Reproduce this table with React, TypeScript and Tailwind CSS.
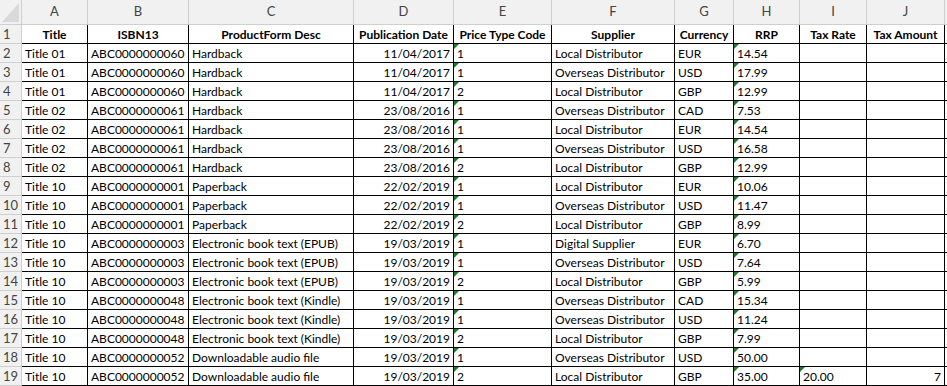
import React from 'react'

const cols = [
  { key: 'A', w: 'w-[66px]', head: 'Title', align: 'text-left' },
  { key: 'B', w: 'w-[101px]', head: 'ISBN13', align: 'text-left' },
  { key: 'C', w: 'w-[165px]', head: 'ProductForm Desc', align: 'text-left' },
  { key: 'D', w: 'w-[100px]', head: 'Publication Date', align: 'text-right' },
  { key: 'E', w: 'w-[98px]', head: 'Price Type Code', align: 'text-left' },
  { key: 'F', w: 'w-[123px]', head: 'Supplier', align: 'text-left' },
  { key: 'G', w: 'w-[59px]', head: 'Currency', align: 'text-left' },
  { key: 'H', w: 'w-[66px]', head: 'RRP', align: 'text-left' },
  { key: 'I', w: 'w-[67px]', head: 'Tax Rate', align: 'text-left' },
  { key: 'J', w: 'w-[78px]', head: 'Tax Amount', align: 'text-right' },
  { key: '', w: 'w-[60px]', head: '', align: 'text-left' },
]

const rows: string[][] = [
  ['Title 01', 'ABC0000000060', 'Hardback', '11/04/2017', '1', 'Local Distributor', 'EUR', '14.54', '', ''],
  ['Title 01', 'ABC0000000060', 'Hardback', '11/04/2017', '1', 'Overseas Distributor', 'USD', '17.99', '', ''],
  ['Title 01', 'ABC0000000060', 'Hardback', '11/04/2017', '2', 'Local Distributor', 'GBP', '12.99', '', ''],
  ['Title 02', 'ABC0000000061', 'Hardback', '23/08/2016', '1', 'Overseas Distributor', 'CAD', '7.53', '', ''],
  ['Title 02', 'ABC0000000061', 'Hardback', '23/08/2016', '1', 'Local Distributor', 'EUR', '14.54', '', ''],
  ['Title 02', 'ABC0000000061', 'Hardback', '23/08/2016', '1', 'Overseas Distributor', 'USD', '16.58', '', ''],
  ['Title 02', 'ABC0000000061', 'Hardback', '23/08/2016', '2', 'Local Distributor', 'GBP', '12.99', '', ''],
  ['Title 10', 'ABC0000000001', 'Paperback', '22/02/2019', '1', 'Local Distributor', 'EUR', '10.06', '', ''],
  ['Title 10', 'ABC0000000001', 'Paperback', '22/02/2019', '1', 'Overseas Distributor', 'USD', '11.47', '', ''],
  ['Title 10', 'ABC0000000001', 'Paperback', '22/02/2019', '2', 'Local Distributor', 'GBP', '8.99', '', ''],
  ['Title 10', 'ABC0000000003', 'Electronic book text (EPUB)', '19/03/2019', '1', 'Digital Supplier', 'EUR', '6.70', '', ''],
  ['Title 10', 'ABC0000000003', 'Electronic book text (EPUB)', '19/03/2019', '1', 'Overseas Distributor', 'USD', '7.64', '', ''],
  ['Title 10', 'ABC0000000003', 'Electronic book text (EPUB)', '19/03/2019', '2', 'Local Distributor', 'GBP', '5.99', '', ''],
  ['Title 10', 'ABC0000000048', 'Electronic book text (Kindle)', '19/03/2019', '1', 'Overseas Distributor', 'CAD', '15.34', '', ''],
  ['Title 10', 'ABC0000000048', 'Electronic book text (Kindle)', '19/03/2019', '1', 'Overseas Distributor', 'USD', '11.24', '', ''],
  ['Title 10', 'ABC0000000048', 'Electronic book text (Kindle)', '19/03/2019', '2', 'Local Distributor', 'GBP', '7.99', '', ''],
  ['Title 10', 'ABC0000000052', 'Downloadable audio file', '19/03/2019', '1', 'Overseas Distributor', 'USD', '50.00', '', ''],
  ['Title 10', 'ABC0000000052', 'Downloadable audio file', '19/03/2019', '2', 'Local Distributor', 'GBP', '35.00', '20.00', '7'],
]

// text stored as number flag (green corner)
function flagged(ci: number, val: string) {
  return val !== '' && (ci === 4 || ci === 7 || ci === 8)
}

export default function App() {
  return (
    <div className="w-[947px] h-[386px] overflow-hidden bg-white text-black" style={{ fontFamily: 'Lato, "Liberation Sans", sans-serif' }}>
      {/* column letters */}
      <div className="flex h-[25px] w-max bg-[#f1f1f1] border-b border-[#cfcfcf]">
        <div className="w-[22px] h-full border-r border-[#cfcfcf] relative">
          <svg className="absolute inset-0" width="21" height="24" viewBox="0 0 21 24">
            <polygon points="2,22 19,22 19,3" fill="#d9d9d9" />
          </svg>
        </div>
        {cols.map((c, i) => (
          <div key={i} className={`${c.w} h-full border-r border-[#cfcfcf] flex items-center justify-center text-[13px] text-[#444]`}>
            {c.key}
          </div>
        ))}
      </div>

      {/* header row */}
      <div className="flex h-[19px] w-max">
        <div className="w-[22px] h-full bg-[#f1f1f1] border-r border-b border-[#cfcfcf] pl-[3px] text-[13px] text-[#444] leading-[19px]">1</div>
        {cols.map((c, i) => (
          <div key={i} className={`${c.w} h-full border-r border-b border-black text-center font-bold text-[12px] leading-[19px] whitespace-nowrap overflow-hidden`}>
            {c.head}
          </div>
        ))}
      </div>

      {rows.map((r, ri) => (
        <div key={ri} className="flex h-[19px] w-max">
          <div className="w-[22px] h-full bg-[#f1f1f1] border-r border-b border-[#cfcfcf] pl-[3px] text-[13px] text-[#444] leading-[19px]">{ri + 2}</div>
          {cols.map((c, ci) => {
            const val = r[ci] ?? ''
            return (
              <div key={ci} className={`${c.w} h-full relative border-r border-b border-black ${c.align} px-[3px] text-[12px] leading-[19px] whitespace-nowrap overflow-hidden`}>
                {flagged(ci, val) && (
                  <span className="absolute left-0 top-0 w-0 h-0 border-t-[5px] border-t-[#1f7a2e] border-r-[5px] border-r-transparent" />
                )}
                {val}
              </div>
            )
          })}
        </div>
      ))}
    </div>
  )
}
